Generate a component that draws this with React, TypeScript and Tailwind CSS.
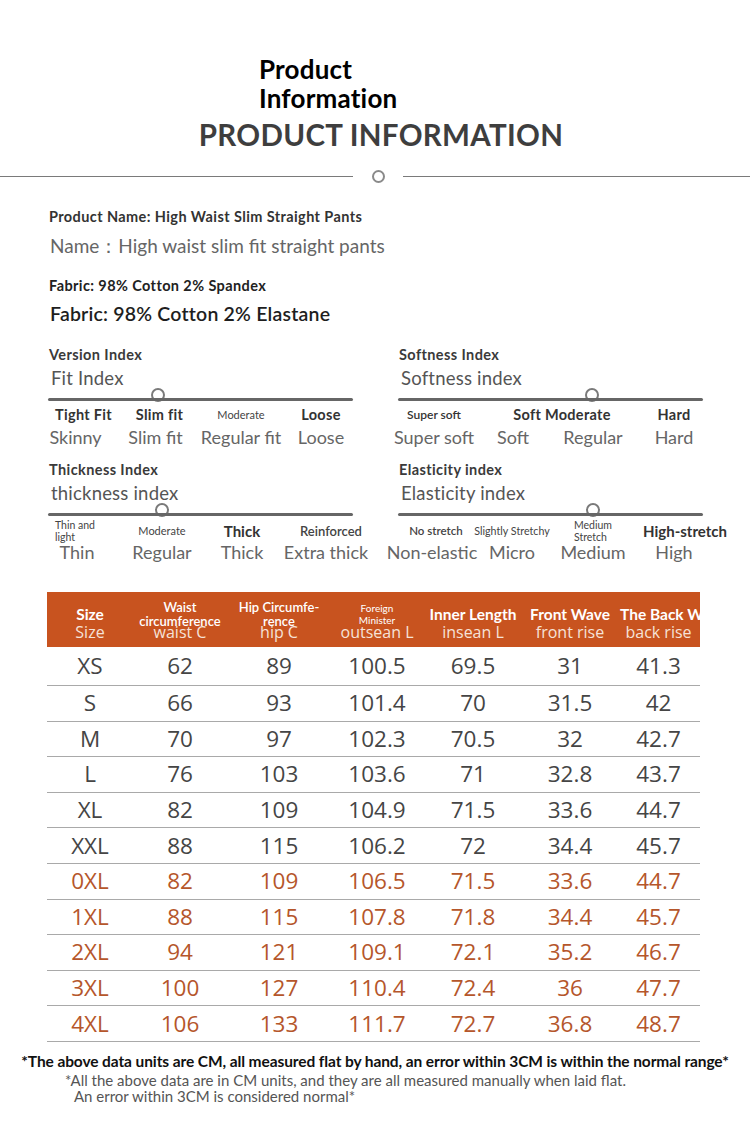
import React from "react";

type Lbl = { text: string[]; cls: string; span?: number; extra?: string };
type Idx = {
  title: string;
  sub: string;
  knob: number;
  cols: string;
  labels: Lbl[];
  subs: string[];
  subExtra?: string[];
};

const B = "font-bold text-[14.5px] tracking-[0.3px] text-[#333]";

const left1: Idx = {
  title: "Version Index",
  sub: "Fit Index",
  knob: 110,
  cols: "grid-cols-[71px_81px_82px_78px]",
  labels: [
    { text: ["Tight Fit"], cls: B },
    { text: ["Slim fit"], cls: B },
    { text: ["Moderate"], cls: "text-[11px] text-[#444]" },
    { text: ["Loose"], cls: B },
  ],
  subs: ["Skinny", "Slim fit", "Regular fit", "Loose"],
  subExtra: ["pr-[16px]", "pr-[8px]", "", ""],
};
const right1: Idx = {
  title: "Softness Index",
  sub: "Softness index",
  knob: 194,
  cols: "grid-cols-[72px_86px_74px_88px]",
  labels: [
    { text: ["Super soft"], cls: "text-[12px] text-[#333] font-semibold" },
    { text: ["Soft Moderate"], cls: B, span: 2, extra: "pl-6" },
    { text: ["Hard"], cls: B },
  ],
  subs: ["Super soft", "Soft", "Regular", "Hard"],
};
const left2: Idx = {
  title: "Thickness Index",
  sub: "thickness index",
  knob: 114,
  cols: "grid-cols-[58px_112px_48px_120px]",
  labels: [
    { text: ["Thin and", "light"], cls: "text-[10.5px] text-[#444]", extra: "justify-start pl-[7px]" },
    { text: ["Moderate"], cls: "text-[11px] text-[#444]" },
    { text: ["Thick"], cls: "font-bold text-[15px] text-[#333]" },
    { text: ["Reinforced"], cls: "text-[13px] text-[#444] font-semibold", extra: "pl-[10px]" },
  ],
  subs: ["Thin", "Regular", "Thick", "Extra thick"],
};
const right2: Idx = {
  title: "Elasticity index",
  sub: "Elasticity index",
  knob: 195,
  cols: "grid-cols-[68px_92px_70px_92px]",
  labels: [
    { text: ["No stretch"], cls: "text-[11.5px] text-[#444] font-semibold", extra: "pl-2" },
    { text: ["Slightly Stretchy"], cls: "text-[10.7px] text-[#444]" },
    { text: ["Medium", "Stretch"], cls: "text-[10.5px] text-[#444]" },
    { text: ["High-stretch"], cls: "font-bold text-[15px] text-[#333]", extra: "pl-[22px]" },
  ],
  subs: ["Non-elastic", "Micro", "Medium", "High"],
};

function IndexBlock({ d }: { d: Idx }) {
  return (
    <div className="w-[305px]">
      <div className="text-[14.5px] tracking-[0.4px] font-bold text-[#3a3a3a] leading-[18px] pl-[1px]">{d.title}</div>
      <div className="text-[18.5px] tracking-[0.2px] text-[#555] leading-[24px] pl-[3px] mt-[2px]">{d.sub}</div>
      <div className="relative h-[3px] mt-[8px]">
        <div
          className="absolute w-[14px] h-[14px] rounded-full border-2 border-[#7a7a7a] bg-white top-[-10px]"
          style={{ left: d.knob - 7 }}
        />
        <div className="absolute inset-0 bg-[#666] rounded-full" />
      </div>
      <div className={`grid ${d.cols} h-[22px] mt-[3px] items-center`}>
        {d.labels.map((l, i) => (
          <div
            key={i}
            className={`flex justify-center whitespace-nowrap ${l.span === 2 ? "col-span-2" : ""} ${l.extra ?? ""}`}
          >
            <div className={`${l.cls} ${l.text.length > 1 ? "leading-[12px]" : "leading-[16px]"}`}>
              {l.text.map((t, j) => (
                <div key={j}>{t}</div>
              ))}
            </div>
          </div>
        ))}
      </div>
      <div className={`grid ${d.cols} h-[22px]`}>
        {d.subs.map((s, i) => (
          <div
            key={i}
            className={`flex justify-center whitespace-nowrap text-[18px] text-[#666] leading-[22px] ${
              d.subExtra ? d.subExtra[i] : ""
            }`}
          >
            {s}
          </div>
        ))}
      </div>
    </div>
  );
}

const widths = [
  "w-[86px]",
  "w-[94px]",
  "w-[104px]",
  "w-[92px]",
  "w-[100px]",
  "w-[94px]",
  "w-[83px]",
];

const heads: { top: string[]; cls: string; low: string; extra?: string }[] = [
  { top: ["Size"], cls: "text-[15.5px] font-bold leading-[16px]", low: "Size" },
  { top: ["Waist", "circumference"], cls: "text-[13px] font-semibold leading-[14px]", low: "waist C" },
  { top: ["Hip Circumfe-", "rence"], cls: "text-[13px] font-semibold leading-[14px]", low: "hip C" },
  { top: ["Foreign", "Minister"], cls: "text-[10px] leading-[12px]", low: "outsean L" },
  { top: ["Inner Length"], cls: "text-[15.5px] font-bold leading-[16px]", low: "insean L" },
  { top: ["Front Wave"], cls: "text-[15.5px] font-bold leading-[16px]", low: "front rise" },
  { top: ["The Back Wave"], cls: "text-[15.5px] font-bold leading-[16px]", low: "back rise", extra: "self-start pl-[3px]" },
];

const rows: (string | number)[][] = [
  ["XS", 62, 89, "100.5", "69.5", 31, "41.3"],
  ["S", 66, 93, "101.4", 70, "31.5", 42],
  ["M", 70, 97, "102.3", "70.5", 32, "42.7"],
  ["L", 76, 103, "103.6", 71, "32.8", "43.7"],
  ["XL", 82, 109, "104.9", "71.5", "33.6", "44.7"],
  ["XXL", 88, 115, "106.2", 72, "34.4", "45.7"],
  ["0XL", 82, 109, "106.5", "71.5", "33.6", "44.7"],
  ["1XL", 88, 115, "107.8", "71.8", "34.4", "45.7"],
  ["2XL", 94, 121, "109.1", "72.1", "35.2", "46.7"],
  ["3XL", 100, 127, "110.4", "72.4", 36, "47.7"],
  ["4XL", 106, 133, "111.7", "72.7", "36.8", "48.7"],
];

export default function App() {
  return (
    <div className="w-[750px] h-[1148px] bg-white overflow-hidden font-['Lato','Noto_Sans',sans-serif]">
      {/* Header */}
      <div className="pt-[55px] pl-[259px] text-[26px] tracking-[0.2px] font-bold leading-[29px] text-black">
        <div>Product</div>
        <div>Information</div>
      </div>
      <div className="pl-[12px] text-center text-[29.5px] font-bold text-[#3e3e3e] leading-[38px] mt-[3px] tracking-[0.3px]">
        PRODUCT INFORMATION
      </div>
      <div className="flex items-center mt-[15px] h-[14px]">
        <div className="w-[353px] h-px bg-[#7a7a7a]" />
        <div className="w-[50px] flex justify-center">
          <div className="w-[13px] h-[13px] rounded-full border-2 border-[#8a8a8a]" />
        </div>
        <div className="flex-1 h-px bg-[#7a7a7a]" />
      </div>

      {/* Product name & fabric */}
      <div className="pl-[49px] mt-[25px]">
        <div className="text-[14.5px] tracking-[0.4px] font-bold text-[#333] leading-[18px]">
          Product Name: High Waist Slim Straight Pants
        </div>
        <div className="text-[19px] text-[#666] leading-[24px] mt-[8px] pl-[1px]">
          Name：High waist slim fit straight pants
        </div>
        <div className="text-[14.5px] tracking-[0.4px] font-bold text-[#222] leading-[18px] mt-[19px]">
          Fabric: 98% Cotton 2% Spandex
        </div>
        <div className="text-[19.5px] tracking-[0.2px] font-semibold text-[#1e1e1e] leading-[24px] mt-[7px] pl-[1px]">
          Fabric: 98% Cotton 2% Elastane
        </div>
      </div>

      {/* Indexes */}
      <div className="pl-[48px] mt-[20px] flex gap-[45px]">
        <IndexBlock d={left1} />
        <IndexBlock d={right1} />
      </div>
      <div className="pl-[48px] mt-[13px] flex gap-[45px]">
        <IndexBlock d={left2} />
        <IndexBlock d={right2} />
      </div>

      {/* Table */}
      <div className="ml-[47px] w-[653px] mt-[29px] font-['Open_Sans','Noto_Sans',sans-serif]">
        <div className="flex h-[55px] bg-[#c8531f] overflow-hidden text-white">
          {heads.map((h, i) => (
            <div key={i} className={`${widths[i]} shrink-0 flex flex-col items-center whitespace-nowrap`}>
              <div className={`h-[44px] flex items-center justify-center font-['Lato',sans-serif] ${h.extra ?? ""}`}>
                <div className={`${h.cls} text-center`}>
                  {h.top.map((t, j) => (
                    <div key={j}>{t}</div>
                  ))}
                </div>
              </div>
              <div className="-mt-[12px] text-[16px] leading-[16px] text-[#f6e2d8]">{h.low}</div>
            </div>
          ))}
        </div>
        {rows.map((r, ri) => (
          <div
            key={ri}
            className={`flex items-center border-b border-[#a9a9a9] ${ri === 0 ? "h-[39px]" : "h-[35.6px]"} ${
              ri >= 6 ? "text-[#b5562b]" : "text-[#454545]"
            }`}
          >
            {r.map((c, ci) => (
              <div key={ci} className={`${widths[ci]} shrink-0 text-center text-[22.5px] leading-[26px]`}>
                {c}
              </div>
            ))}
          </div>
        ))}
      </div>

      {/* Footer */}
      <div className="mt-[10px] text-center text-[15.5px] font-bold text-[#111] leading-[18px] tracking-[-0.1px]">
        *The above data units are CM, all measured flat by hand, an error within 3CM is within the normal range*
      </div>
      <div className="pl-[65px] text-[15px] text-[#555] leading-[16px] mt-[2px]">
        <div>*All the above data are in CM units, and they are all measured manually when laid flat.</div>
        <div className="pl-[9px]">An error within 3CM is considered normal*</div>
      </div>
    </div>
  );
}
